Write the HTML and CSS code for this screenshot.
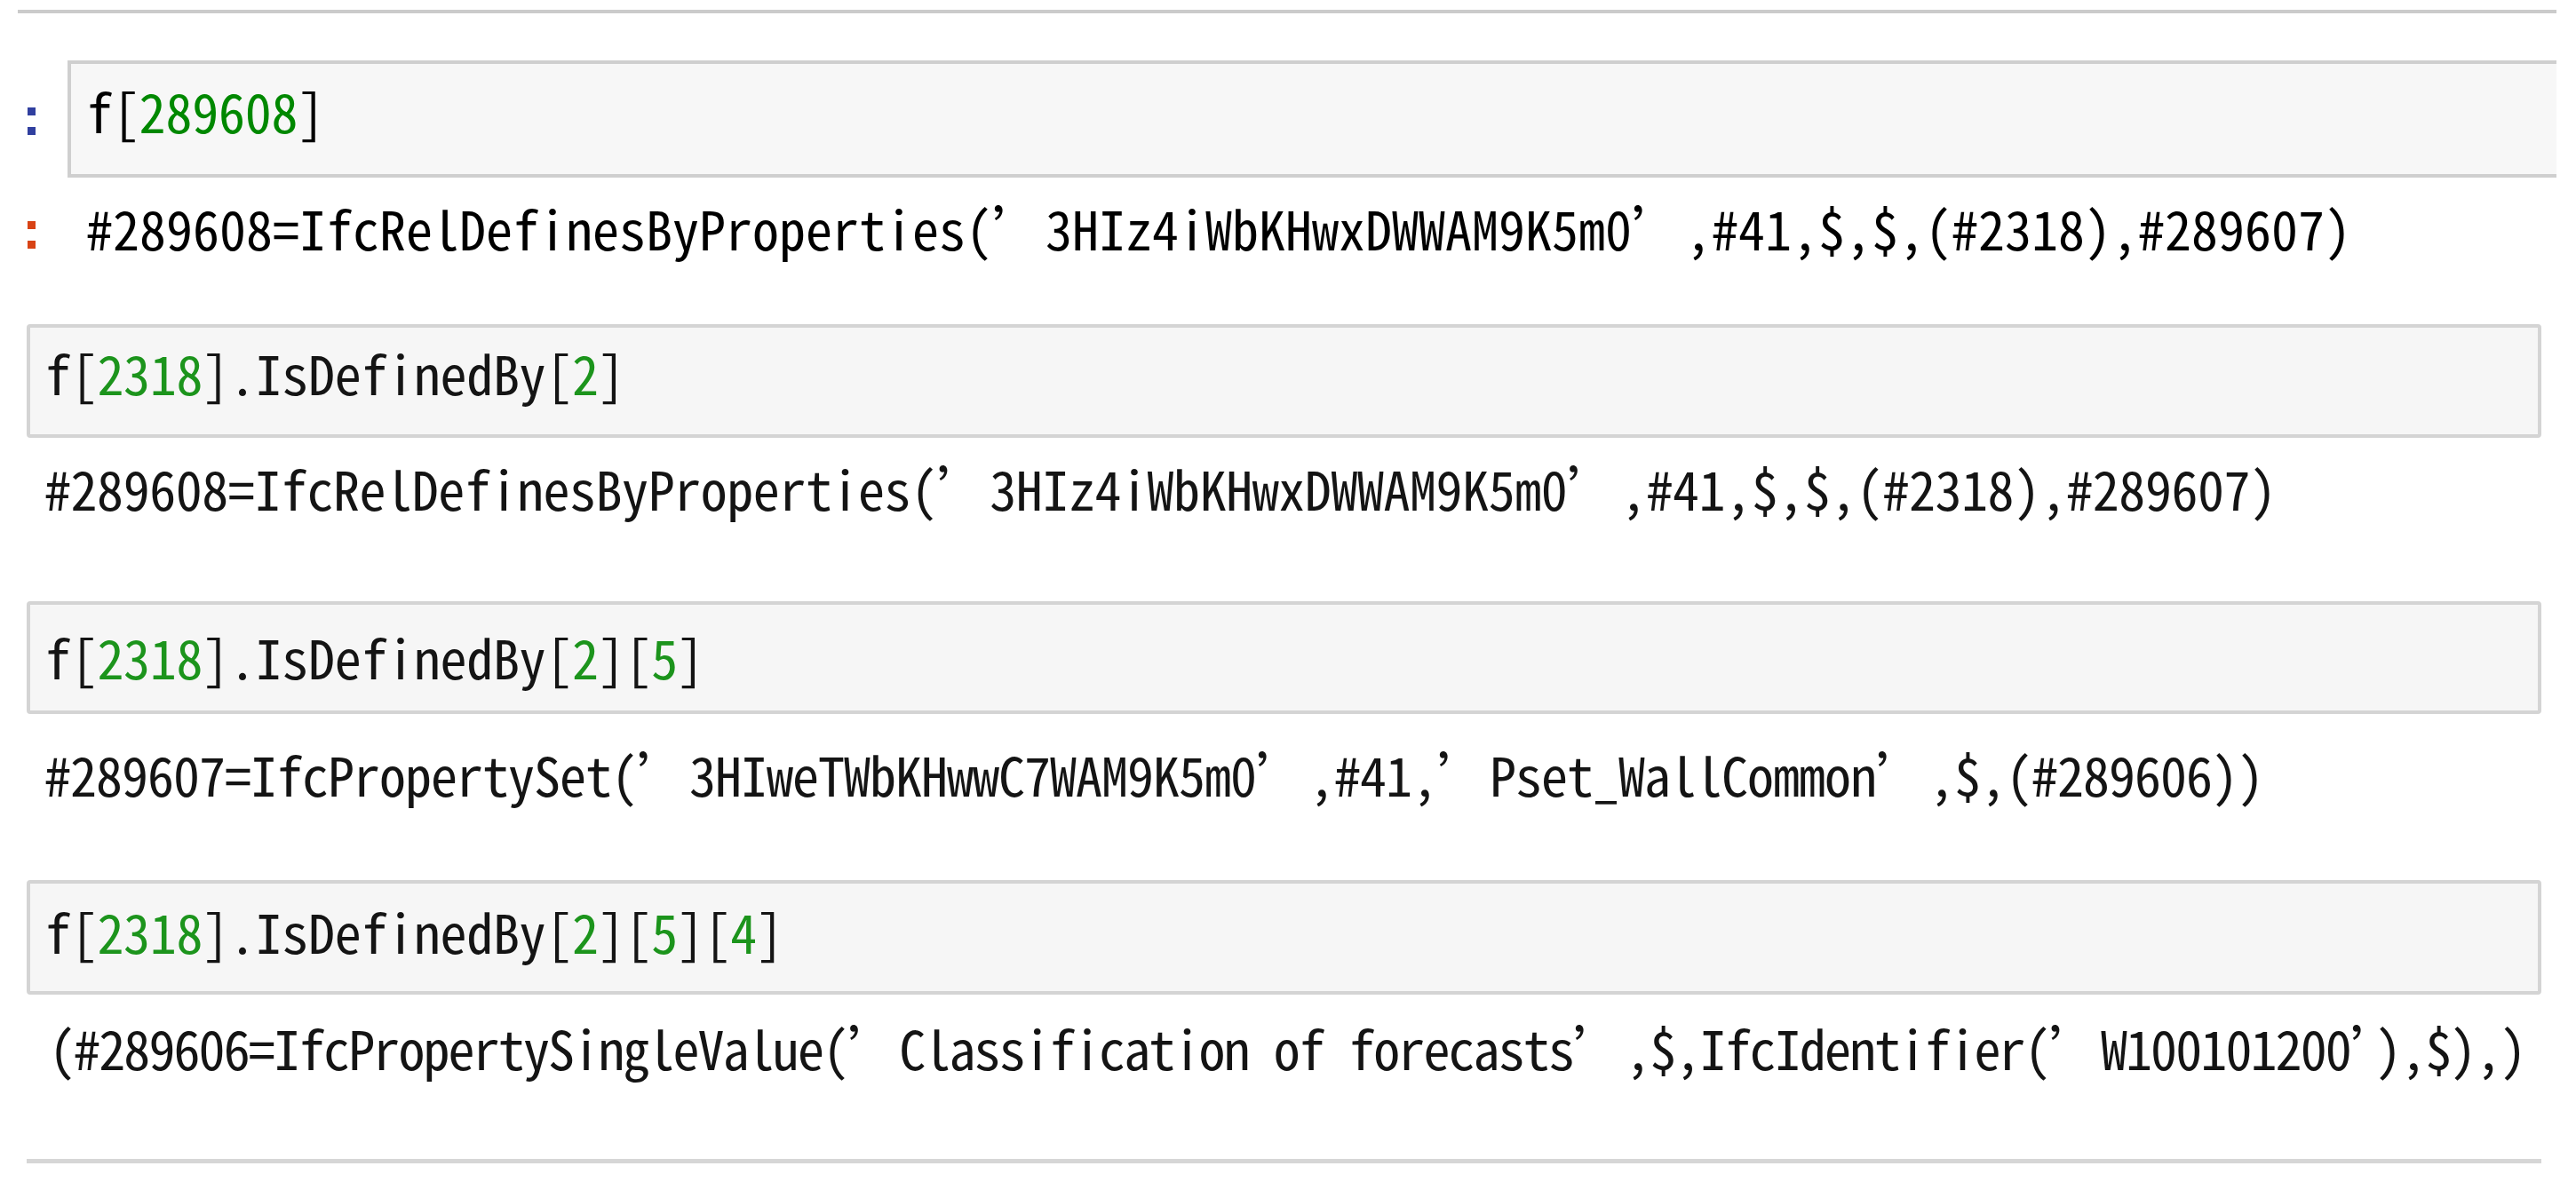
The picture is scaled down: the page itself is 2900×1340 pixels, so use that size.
FILE: index.html
```html
<!DOCTYPE html>
<html>
<head>
<meta charset="utf-8">
<link rel="stylesheet" href="styles.css">
</head>
<body>
<div class="rule"></div>

<div class="nb-top">
  <div class="row in-row">
    <div class="prompt prompt-in"><span class="dot"></span><span class="dot"></span></div>
    <div class="box box-top code">f[<span class="n">289608</span>]</div>
  </div>
  <div class="row out-row">
    <div class="prompt prompt-out"><span class="dot"></span><span class="dot"></span></div>
    <div class="out out-top code">#289608=IfcRelDefinesByProperties(’3HIz4iWbKHwxDWWAM9K5m0’,#41,$,$,(#2318),#289607)</div>
  </div>
</div>

<div class="nb-bottom">
  <div class="box box-a code">f[<span class="n">2318</span>].IsDefinedBy[<span class="n">2</span>]</div>
  <div class="out out-a code">#289608=IfcRelDefinesByProperties(’3HIz4iWbKHwxDWWAM9K5m0’,#41,$,$,(#2318),#289607)</div>

  <div class="box box-b code">f[<span class="n">2318</span>].IsDefinedBy[<span class="n">2</span>][<span class="n">5</span>]</div>
  <div class="out out-b code">#289607=IfcPropertySet(’3HIweTWbKHwwC7WAM9K5m0’,#41,’Pset_WallCommon’,$,(#289606))</div>

  <div class="box box-c code">f[<span class="n">2318</span>].IsDefinedBy[<span class="n">2</span>][<span class="n">5</span>][<span class="n">4</span>]</div>
  <div class="out out-c code">(#289606=IfcPropertySingleValue(’Classification of forecasts’,$,IfcIdentifier(’W100101200’),$),)</div>

  <div class="end-rule"></div>
</div>
</body>
</html>
```
FILE: styles.css
```css
html, body {
  margin: 0;
  padding: 0;
  background: #ffffff;
  overflow: hidden;
}

body {
  width: 2900px;
  height: 1340px;
  font-family: "Noto Sans Mono CJK SC", "Liberation Mono", monospace;
}

.rule {
  height: 4px;
  background: #cbcbcb;
  margin: 11px 22px 0 20px;
}

.code {
  font-size: 60px;
  line-height: 60px;
  white-space: pre;
  color: #000;
}

.n {
  color: #008800;
}

.row {
  display: flex;
}

.prompt {
  width: 76px;
  flex: none;
  display: flex;
  flex-direction: column;
  gap: 13px;
  padding-left: 31px;
  box-sizing: border-box;
}

.dot {
  display: block;
  width: 9px;
  height: 9px;
}

.prompt-in .dot {
  background: #303f9f;
}

.prompt-out .dot {
  background: #d84315;
}

.in-row {
  margin-top: 53px;
}

.prompt-in {
  padding-top: 53px;
}

.prompt-out {
  padding-top: 49px;
}

.box-top {
  flex: 1;
  margin-right: 22px;
  background: #f7f7f7;
  border: 4px solid #cfcfcf;
  border-right: none;
  padding: 22px 17px 42px;
  letter-spacing: -0.2px;
}

.out-top {
  padding: 26px 0 0 21px;
}

.nb-bottom {
  margin: 79px 39px 0 30px;
}

.nb-bottom .box {
  background: #f6f6f6;
  border: 4px solid #d4d4d4;
  border-radius: 4px;
  padding-left: 16px;
  letter-spacing: -0.3px;
}

.nb-bottom .code {
  color: #141414;
}

.nb-bottom .n {
  color: #1c941c;
}

.nb-bottom .out {
  padding-left: 20px;
}

.box-a {
  padding-top: 20px;
  padding-bottom: 40px;
}

.out-a {
  padding-top: 26px;
  letter-spacing: -0.45px;
}

.box-b {
  margin-top: 98px;
  padding-top: 28px;
  padding-bottom: 31px;
}

.out-b {
  padding-top: 37px;
  letter-spacing: -1px;
}

.box-c {
  margin-top: 90px;
  padding-top: 23px;
  padding-bottom: 38px;
}

.nb-bottom .out-c {
  padding-top: 29px;
  padding-left: 25px;
  letter-spacing: -1.9px;
}

.end-rule {
  margin-top: 96px;
  border-top: 5px solid #d6d6d6;
}
```
